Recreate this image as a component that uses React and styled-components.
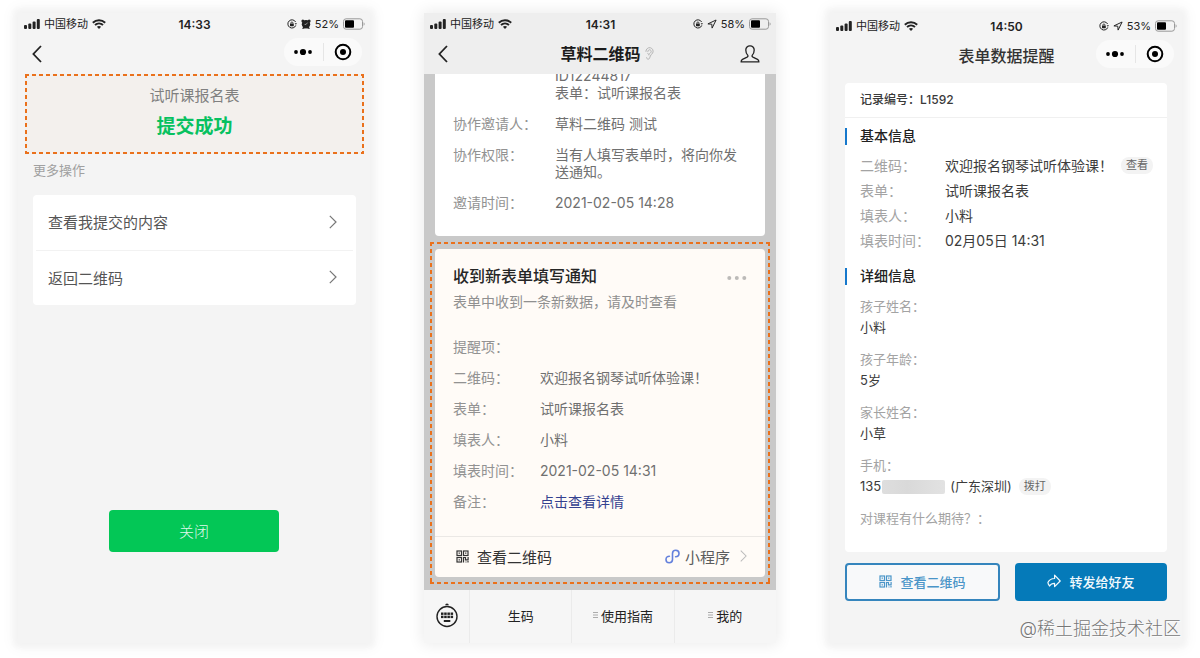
import React from 'react';
import styled, { createGlobalStyle, css } from 'styled-components';

const GlobalStyle = createGlobalStyle`
  * {
    box-sizing: border-box;
  }
  body {
    margin: 0;
    background: #fff;
    font-family: Inter, "Noto Sans CJK SC", sans-serif;
    color: #333;
  }
  button {
    font-family: inherit;
    color: inherit;
    border: 0;
    padding: 0;
    background: none;
    cursor: pointer;
  }
  h1, h2, p, dl, dd {
    margin: 0;
    font-weight: 400;
  }
  svg {
    display: block;
    flex: none;
  }
`;

const Page = styled.main`
  position: relative;
  display: grid;
  grid-template-columns: repeat(3, 1fr);
  gap: 54px;
  min-height: 100vh;
  padding: 13px 18px 15px;
`;

const Phone = styled.section`
  display: flex;
  flex-direction: column;
  min-width: 0;
  padding-top: ${(props) => props.$top || 0}px;
  background: ${(props) => props.$bg || '#f4f4f4'};
  box-shadow: ${(props) =>
    props.$flat
      ? '0 0 14px 2px rgba(0, 0, 0, 0.08)'
      : '0 0 6px 3px #f2f2f2, 0 0 14px 4px rgba(0, 0, 0, 0.05)'};
`;

/* status bar */

const StatusRow = styled.div`
  display: grid;
  grid-template-columns: 1fr auto 1fr;
  align-items: center;
  height: 22px;
  padding: 0 5px 0 6px;
  font-size: 12px;
  color: #222;
`;

const StatusSide = styled.div`
  display: flex;
  align-items: center;
  justify-content: ${(props) => (props.$end ? 'flex-end' : 'flex-start')};
  gap: 4px;
`;

const StatusText = styled.span`
  font-size: 11px;
  line-height: 16px;
`;

const Time = styled.span`
  font-weight: 600;
`;

/* nav bar */

const Nav = styled.header`
  display: grid;
  grid-template-columns: 1fr auto 1fr;
  align-items: start;
  height: 39px;
  padding: 3px 8px 0 9px;
`;

const NavTitle = styled.h1`
  display: flex;
  align-items: center;
  gap: 4px;
  height: 30px;
  padding-left: ${(props) => (props.$bold ? 13 : 0)}px;
  font-size: 16px;
  font-weight: ${(props) => (props.$bold ? 600 : 500)};
  color: ${(props) => (props.$bold ? '#1c1c1c' : '#333')};
`;

const NavButton = styled.button`
  display: flex;
  align-items: center;
  justify-content: center;
  width: ${(props) => props.$width || 20}px;
  height: 32px;
  color: #222;
  justify-self: ${(props) => (props.$end ? 'end' : 'start')};
`;

const Capsule = styled.div`
  display: flex;
  align-items: center;
  grid-column: 3;
  justify-self: end;
  width: 78px;
  height: 28px;
  border-radius: 14px;
  background: #fafafa;
`;

const CapsuleButton = styled.button`
  display: flex;
  flex: 1;
  align-items: center;
  justify-content: center;
  height: 18px;
  color: #000;

  & + & {
    border-left: 1px solid #e6e6e6;
  }
`;

/* 주황색 점선 */
const dashed = css`
  background-image:
    repeating-linear-gradient(90deg, #ea711c 0 4px, transparent 4px 7px),
    repeating-linear-gradient(90deg, #ea711c 0 4px, transparent 4px 7px),
    repeating-linear-gradient(180deg, #ea711c 0 4px, transparent 4px 7px),
    repeating-linear-gradient(180deg, #ea711c 0 4px, transparent 4px 7px);
  background-size: 100% 2px, 100% 2px, 2px 100%, 2px 100%;
  background-position: 0 0, 0 100%, 0 0, 100% 0;
  background-repeat: no-repeat;
`;

/* first phone */

const ResultBox = styled.div`
  ${dashed}
  margin: 0 6px 0 7px;
  height: 80px;
  padding-top: 11px;
  background-color: #f3f0ed;
  text-align: center;
`;

const ResultName = styled.p`
  font-size: 15px;
  line-height: 22px;
  color: #808080;
`;

const ResultText = styled.p`
  margin-top: 8px;
  font-size: 19px;
  line-height: 24px;
  font-weight: 700;
  color: #07c160;
`;

const GroupLabel = styled.h2`
  margin: 6px 15px 15px;
  font-size: 13px;
  line-height: 20px;
  color: #a0a0a0;
`;

const LinkList = styled.div`
  margin: 0 14px 0 15px;
  padding: 0 3px;
  border-radius: 4px;
  background: #fff;
`;

const LinkRow = styled.button`
  display: flex;
  align-items: center;
  justify-content: space-between;
  width: 100%;
  height: 55px;
  padding: 0 16px 2px 12px;
  font-size: 15px;
  color: #555;

  & + & {
    border-top: 1px solid #f2f2f2;
  }
`;

const CloseButton = styled.button`
  align-self: center;
  width: 170px;
  height: 42px;
  margin-top: 205px;
  padding-bottom: 2px;
  border-radius: 4px;
  background: #03c756;
  color: #dff8e9;
  font-size: 15px;
  font-weight: 300;
`;

/* second phone */

const Thread = styled.div`
  flex: 1;
  overflow: hidden;
  background: #c9c9c9;
`;

const OldCard = styled.article`
  margin: -7px 11px 6px;
  padding: 0 18px 25px;
  border-radius: 4px;
  background: #fff;
`;

const CardFrame = styled.div`
  ${dashed}
  margin: 0 6px 5px;
  padding: 7px 5px;
`;

const Card = styled.article`
  border-radius: 4px;
  background: #fffbf7;
`;

const CardBody = styled.div`
  padding: 15px 18px 26px;
`;

const CardHead = styled.div`
  display: flex;
  align-items: center;
  justify-content: space-between;
`;

const CardTitle = styled.h2`
  font-size: 16px;
  line-height: 24px;
  font-weight: 500;
  color: #262626;
`;

const CardNote = styled.p`
  margin: 5px 0 28px;
  font-size: 14px;
  line-height: 17px;
  color: #909090;
`;

const Fields = styled.dl`
  display: grid;
  grid-template-columns: ${(props) => props.$label}px 1fr;
  row-gap: ${(props) => props.$gap || 0}px;
  font-size: 14px;
  line-height: ${(props) => props.$line}px;
`;

const Label = styled.dt`
  color: ${(props) => (props.$light ? '#a3a3a3' : '#929292')};
`;

const Value = styled.dd`
  display: ${(props) => (props.$row ? 'flex' : 'block')};
  align-items: center;
  white-space: ${(props) => (props.$row ? 'nowrap' : 'pre-line')};
  color: ${(props) => (props.$dark ? '#3c3c3c' : '#707070')};
`;

const DetailLink = styled.a`
  color: #34418f;
  text-decoration: none;
`;

const CardFoot = styled.div`
  display: flex;
  align-items: center;
  height: 41px;
  padding: 0 18px 2px 21px;
  border-top: 1px solid #ebe8e5;
  font-size: 15px;
  color: #333;
`;

const FootButton = styled.button`
  display: flex;
  align-items: center;
  gap: ${(props) => props.$gap}px;
  margin-left: ${(props) => (props.$end ? 'auto' : 0)};
  font-size: 15px;
  color: ${(props) => (props.$end ? '#5c5c5c' : '#333')};

  svg:last-child:not(:first-child) {
    margin-left: 5px;
  }
`;

const Tabs = styled.nav`
  display: grid;
  grid-template-columns: 45px 1fr 1fr 1fr;
  height: 53px;
  background: #f6f6f6;
`;

const Tab = styled.button`
  display: flex;
  align-items: center;
  justify-content: center;
  gap: 3px;
  padding-bottom: 3px;
  font-size: 13px;
  color: #222;

  & + & {
    border-left: 1px solid #ebebeb;
  }
`;

/* third phone */

const Record = styled.div`
  margin: 7px 15px 11px;
  padding-bottom: 23px;
  border-radius: 4px;
  background: #fff;
`;

const RecordNo = styled.p`
  height: 35px;
  margin-bottom: 8px;
  padding: 0 15px;
  border-bottom: 1px solid #f0f0f0;
  font-size: 12px;
  line-height: 34px;
  font-weight: 500;
  color: #3a3a3a;
`;

const SectionTitle = styled.h2`
  display: flex;
  align-items: center;
  gap: 13px;
  font-size: 14px;
  line-height: 20px;
  font-weight: 500;
  color: #222;

  &::before {
    content: "";
    width: 2px;
    height: 17px;
    background: #1678cc;
  }
`;

const BasicInfo = styled.div`
  padding: 7px 15px 13px;
`;

const Answers = styled.dl`
  padding: 10px 15px 0;
  font-size: 13px;
  line-height: 21px;

  dd + dt {
    margin-top: 11px;
  }
`;

const Pill = styled.button`
  margin-left: ${(props) => props.$space}px;
  height: 17px;
  padding: 0 5px;
  border-radius: 8px;
  background: #f3f3f3;
  font-size: 11px;
  line-height: 17px;
  color: #666;
`;

const Redacted = styled.span`
  width: 63px;
  height: 14px;
  margin: 0 5px 0 1px;
  border-radius: 2px;
  background: linear-gradient(90deg, #dedede, #d9d9d9 40%, #e2e2e2);
`;

const Actions = styled.div`
  display: grid;
  grid-template-columns: 155fr 152fr;
  gap: 15px;
  margin: 0 15px;
`;

const ActionButton = styled.button`
  display: flex;
  align-items: center;
  justify-content: center;
  gap: 8px;
  height: 38px;
  padding-bottom: 2px;
  border: 2px solid ${(props) => (props.$primary ? '#057ab9' : '#3585bd')};
  border-radius: 4px;
  background: ${(props) => (props.$primary ? '#057ab9' : '#f8f9fa')};
  color: ${(props) => (props.$primary ? '#f2f9fd' : '#4a95c8')};
  font-size: 13px;
  font-weight: 500;
`;

const Watermark = styled.p`
  position: absolute;
  right: 19px;
  bottom: 17px;
  font-size: 18px;
  line-height: 24px;
  font-weight: 300;
  color: #777;
  text-shadow: 0 0 1px #fff, 1px 1px 1px #fff;
`;

/* icons */

const Signal = () => (
  <svg width="16" height="10" viewBox="0 0 16 10" fill="currentColor">
    <rect x="0" y="6" width="3" height="4" rx="1" />
    <rect x="4.3" y="4.4" width="3" height="5.6" rx="1" />
    <rect x="8.6" y="2.4" width="3" height="7.6" rx="1" />
    <rect x="12.8" y="0" width="3" height="10" rx="1" />
  </svg>
);

const Wifi = () => (
  <svg width="14" height="10" viewBox="0 0 14 10" fill="none" stroke="currentColor" strokeWidth="1.9">
    <path d="M.8 3.7a9 9 0 0 1 12.4 0" />
    <path d="M3 6a6 6 0 0 1 8 0" />
    <path d="M7 10 4.9 7.8a3.2 3.2 0 0 1 4.2 0z" fill="currentColor" stroke="none" />
  </svg>
);

const RotationLock = () => (
  <svg width="10" height="10" viewBox="0 0 10 10" fill="none" stroke="currentColor">
    <path d="M8.6 3a4.1 4.1 0 1 0 .2 3.4" />
    <path d="M7.6 4.2h2.4L8.9 5.8z" fill="currentColor" stroke="none" />
    <rect x="3" y="4.5" width="3.8" height="2.7" rx=".4" fill="currentColor" stroke="none" />
    <path d="M3.8 4.6v-.5a1.1 1.1 0 0 1 2.2 0v.5" strokeWidth=".8" />
  </svg>
);

const Alarm = () => (
  <svg width="10" height="10" viewBox="0 0 10 10">
    <g fill="currentColor">
      <circle cx="5" cy="5.2" r="4.2" />
      <circle cx="1.9" cy="1.9" r="1.5" />
      <circle cx="8.1" cy="1.9" r="1.5" />
      <path d="m1 9.8 1.5-2.4 1.6 1.2-.9 1.2zM9 9.8 7.500 7.400 5.900 8.600l.9 1.200z" />
    </g>
    <path d="M5.1 5.4 6.600 3.600M5.1 5.4H3.600" stroke="#ddd" strokeWidth=".6" fill="none" />
  </svg>
);

const Location = () => (
  <svg width="10" height="10" viewBox="0 0 10 10" fill="none" stroke="currentColor" strokeLinejoin="round">
    <path d="M9.1 1 .9 4.9l3.9.3.3 3.9z" />
  </svg>
);

const Battery = () => (
  <svg width="22" height="12" viewBox="0 0 22 12">
    <rect x=".5" y=".8" width="19" height="10.4" rx="2.6" fill="none" stroke="#999" />
    <path d="M20.6 4.2c1.4.6 1.4 3 0 3.6z" fill="#999" />
    <rect x="2" y="2.3" width="9" height="7.4" rx="1" fill="#000" />
  </svg>
);

const BackIcon = () => (
  <svg width="10" height="18" viewBox="0 0 10 18" fill="none" stroke="currentColor" strokeWidth="1.8">
    <path d="M9 1 1.4 9 9 17" />
  </svg>
);

const ArrowRight = ({ color = '#777', size = 14 }) => (
  <svg width={size / 2 + 1} height={size} viewBox="0 0 8 14" fill="none" stroke={color} strokeWidth="1.2">
    <path d="m.8.8 6.2 6.2-6.2 6.2" />
  </svg>
);

const More = () => (
  <svg width="18" height="8" viewBox="0 0 18 8" fill="currentColor">
    <circle cx="2" cy="4" r="1.9" />
    <circle cx="9" cy="4" r="3.1" />
    <circle cx="16" cy="4" r="1.9" />
  </svg>
);

const Target = () => (
  <svg width="18" height="18" viewBox="0 0 18 18">
    <circle cx="9" cy="9" r="7.3" fill="none" stroke="currentColor" strokeWidth="2" />
    <circle cx="9" cy="9" r="3" fill="currentColor" />
  </svg>
);

const Ear = () => (
  <svg width="9" height="13" viewBox="0 0 9 13" fill="none" stroke="#b4b4b4" strokeLinecap="round">
    <path d="M.9 4.4a3.6 3.6 0 1 1 6.8 1.5C7 7.3 5.8 7.6 5.3 9c-.5 1.6-.8 3.2-2.1 3.2-.9 0-1.5-.6-1.6-1.5" />
    <path d="M2.8 4.5a1.7 1.7 0 1 1 2.6 1.4C4.5 6.5 4 6.700 3.9 8M2.7 6.5l.9.7" />
  </svg>
);

const Person = () => (
  <svg width="20" height="18" viewBox="0 0 20 18" fill="none" stroke="currentColor" strokeWidth="1.3" strokeLinejoin="round">
    <path d="M7.9 10.4C6.5 9.2 5.8 7 5.8 5A4 4 0 0 1 10 .9 4 4 0 0 1 14.2 5c0 2-.7 4.2-2.1 5.4-.3.9 0 1.4.8 1.8l4.6 2.1c1 .5 1.4 1.1 1.4 2.6H1.1c0-1.5.4-2.1 1.4-2.6l4.6-2.1c.8-.4 1.1-.9.8-1.8z" />
  </svg>
);

const Dots = () => (
  <svg width="20" height="8" viewBox="0 0 20 8" fill="#bcbab8">
    <circle cx="2.3" cy="6" r="2" />
    <circle cx="9.8" cy="6" r="2" />
    <circle cx="17.3" cy="6" r="2" />
  </svg>
);

const QrIcon = () => (
  <svg width="13" height="13" viewBox="0 0 13 13" fill="none" stroke="currentColor" strokeWidth="1.2">
    <rect x="1" y="1" width="4.5" height="4.5" />
    <rect x="7.5" y="1" width="4.5" height="4.5" />
    <rect x="1" y="7.5" width="4.5" height="4.5" />
    <path d="M2.6 3.2h1.300M9.1 3.2h1.300M2.6 9.8h1.300" />
    <path d="M7.5 12.5V7.5h2v2.4h2.6V7M9.5 12h1M12 11v1.5" />
  </svg>
);

const MiniProgram = () => (
  <svg width="15" height="15" viewBox="0 0 15 15" fill="none" stroke="#6480dc" strokeWidth="1.6" strokeLinecap="round">
    <path d="M4.4 7.2C2.500 7.200 1 8.400 1 10.400s1.400 3.300 3.200 3.300 3.300-1.400 3.300-3.200V4.500c0-1.800 1.500-3.200 3.300-3.200S14 2.600 14 4.600s-1.500 3.200-3.400 3.200" />
  </svg>
);

const Keyboard = () => (
  <svg width="24" height="26" viewBox="0 0 24 26" fill="#222">
    <circle cx="12" cy="14.5" r="10" fill="none" stroke="#222" strokeWidth="1.4" />
    <path d="M10.2 3.2a1.8 1.8 0 0 1 3.6 0z" />
    {[6, 9.2, 12.4, 15.6].map((x) => (
      <React.Fragment key={x}>
        <rect x={x} y="10.5" width="2.5" height="2.4" />
        <rect x={x} y="13.7" width="2.5" height="2.4" />
      </React.Fragment>
    ))}
    <rect x="8.8" y="18" width="6.5" height="2" />
  </svg>
);

const MenuMark = () => (
  <svg width="5" height="6" viewBox="0 0 5 6" stroke="#999" fill="none">
    <path d="M0 .5h5M0 3h5M0 5.5h5" strokeWidth=".8" />
  </svg>
);

const Share = () => (
  <svg width="14" height="14" viewBox="0 0 14 14" fill="none" stroke="currentColor" strokeWidth="1.2" strokeLinejoin="round">
    <path d="M7.600 1.200 13.200 7 7.600 12.600V9.400C5 9.400 3.600 10.200 2.600 12 1.600 10.800.9 9.800.9 8.600 2 6 4.400 4.600 7.600 4.500z" />
  </svg>
);

/* shared parts */

const StatusBar = ({ time, battery, icon }) => (
  <StatusRow>
    <StatusSide>
      <Signal />
      <StatusText>中国移动</StatusText>
      <Wifi />
    </StatusSide>
    <Time>{time}</Time>
    <StatusSide $end>
      <RotationLock />
      {icon}
      <StatusText>{battery}</StatusText>
      <Battery />
    </StatusSide>
  </StatusRow>
);

const MiniCapsule = () => (
  <Capsule>
    <CapsuleButton aria-label="更多"><More /></CapsuleButton>
    <CapsuleButton aria-label="关闭小程序"><Target /></CapsuleButton>
  </Capsule>
);

const inviteRows = [
  ['', 'ID12244817\n表单：试听课报名表'],
  ['协作邀请人：', '草料二维码 测试'],
  ['协作权限：', '当有人填写表单时，将向你发送通知。'],
  ['邀请时间：', '2021-02-05 14:28'],
];

const noticeRows = [
  ['提醒项：', ''],
  ['二维码：', '欢迎报名钢琴试听体验课！'],
  ['表单：', '试听课报名表'],
  ['填表人：', '小料'],
  ['填表时间：', '2021-02-05 14:31'],
];

const basicRows = [
  ['二维码：', '欢迎报名钢琴试听体验课！', '查看'],
  ['表单：', '试听课报名表'],
  ['填表人：', '小料'],
  ['填表时间：', '02月05日 14:31'],
];

const answerRows = [
  ['孩子姓名：', '小料'],
  ['孩子年龄：', '5岁'],
  ['家长姓名：', '小草'],
];

const SubmitPhone = () => (
  <Phone>
    <StatusBar time="14:33" battery="52%" icon={<Alarm />} />
    <Nav>
      <NavButton aria-label="返回"><BackIcon /></NavButton>
      <MiniCapsule />
    </Nav>
    <ResultBox>
      <ResultName>试听课报名表</ResultName>
      <ResultText>提交成功</ResultText>
    </ResultBox>
    <GroupLabel>更多操作</GroupLabel>
    <LinkList>
      <LinkRow>查看我提交的内容<ArrowRight /></LinkRow>
      <LinkRow>返回二维码<ArrowRight /></LinkRow>
    </LinkList>
    <CloseButton>关闭</CloseButton>
  </Phone>
);

const NoticePhone = () => (
  <Phone $bg="#eeeeee" $flat>
    <StatusBar time="14:31" battery="58%" icon={<Location />} />
    <Nav>
      <NavButton aria-label="返回"><BackIcon /></NavButton>
      <NavTitle $bold>草料二维码<Ear /></NavTitle>
      <NavButton $end $width={36} aria-label="个人"><Person /></NavButton>
    </Nav>
    <Thread>
      <OldCard>
        <Fields $label={102} $line={17} $gap={14}>
          {inviteRows.map(([label, value]) => (
            <React.Fragment key={value}>
              <Label>{label}</Label>
              <Value>{value}</Value>
            </React.Fragment>
          ))}
        </Fields>
      </OldCard>
      <CardFrame>
        <Card>
          <CardBody>
            <CardHead>
              <CardTitle>收到新表单填写通知</CardTitle>
              <button aria-label="更多"><Dots /></button>
            </CardHead>
            <CardNote>表单中收到一条新数据，请及时查看</CardNote>
            <Fields $label={87} $line={17} $gap={14}>
              {noticeRows.map(([label, value]) => (
                <React.Fragment key={label}>
                  <Label>{label}</Label>
                  <Value>{value}</Value>
                </React.Fragment>
              ))}
              <Label>备注：</Label>
              <Value><DetailLink href="#detail">点击查看详情</DetailLink></Value>
            </Fields>
          </CardBody>
          <CardFoot>
            <FootButton $gap={8}><QrIcon />查看二维码</FootButton>
            <FootButton $gap={5} $end>
              <MiniProgram />小程序<ArrowRight color="#bbb" size={12} />
            </FootButton>
          </CardFoot>
        </Card>
      </CardFrame>
    </Thread>
    <Tabs>
      <Tab aria-label="键盘"><Keyboard /></Tab>
      <Tab>生码</Tab>
      <Tab><MenuMark />使用指南</Tab>
      <Tab><MenuMark />我的</Tab>
    </Tabs>
  </Phone>
);

const RecordPhone = () => (
  <Phone $top={2}>
    <StatusBar time="14:50" battery="53%" icon={<Location />} />
    <Nav>
      <span />
      <NavTitle>表单数据提醒</NavTitle>
      <MiniCapsule />
    </Nav>
    <Record>
      <RecordNo>记录编号：L1592</RecordNo>
      <SectionTitle>基本信息</SectionTitle>
      <BasicInfo>
        <Fields $label={85} $line={25}>
          {basicRows.map(([label, value, action]) => (
            <React.Fragment key={label}>
              <Label $light>{label}</Label>
              <Value $dark $row>
                {value}
                {action && <Pill $space={8}>{action}</Pill>}
              </Value>
            </React.Fragment>
          ))}
        </Fields>
      </BasicInfo>
      <SectionTitle>详细信息</SectionTitle>
      <Answers>
        {answerRows.map(([label, value]) => (
          <React.Fragment key={label}>
            <Label $light>{label}</Label>
            <Value $dark>{value}</Value>
          </React.Fragment>
        ))}
        <Label $light>手机：</Label>
        <Value $dark $row>
          135<Redacted />(广东深圳)<Pill $space={7}>拨打</Pill>
        </Value>
        <Label $light>对课程有什么期待？：</Label>
      </Answers>
    </Record>
    <Actions>
      <ActionButton><QrIcon />查看二维码</ActionButton>
      <ActionButton $primary><Share />转发给好友</ActionButton>
    </Actions>
  </Phone>
);

const App = () => {
  return (
    <>
      <GlobalStyle />
      <Page>
        <SubmitPhone />
        <NoticePhone />
        <RecordPhone />
        <Watermark>@稀土掘金技术社区</Watermark>
      </Page>
    </>
  );
};

export default App;
